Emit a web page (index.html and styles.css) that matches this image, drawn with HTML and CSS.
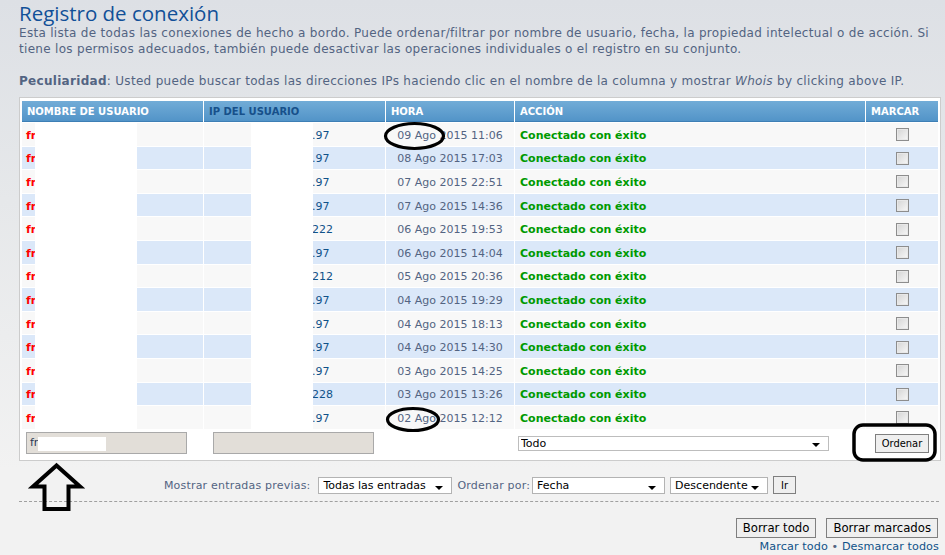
FILE: index.html
```html
<!DOCTYPE html>
<html lang="es">
<head>
<meta charset="utf-8">
<title>Registro de conexión</title>
<link rel="stylesheet" href="styles.css">
</head>
<body>
<div class="page">
  <h1 class="title">Registro de conexión</h1>
  <p class="intro">Esta lista de todas las conexiones de hecho a bordo. Puede ordenar/filtrar por nombre de usuario, fecha, la propiedad intelectual o de acción. Si tiene los permisos adecuados, también puede desactivar las operaciones individuales o el registro en su conjunto.</p>
  <p class="note"><strong>Peculiaridad</strong>: Usted puede buscar todas las direcciones IPs haciendo clic en el nombre de la columna y mostrar <em>Whois</em> by clicking above IP.</p>

  <div class="panel">
    <table class="log">
      <colgroup>
        <col class="c-user"><col class="c-ip"><col class="c-time"><col class="c-act"><col class="c-mark">
      </colgroup>
      <thead>
        <tr>
          <th>Nombre de usuario</th>
          <th class="sorted">IP del usuario</th>
          <th>Hora</th>
          <th>Acción</th>
          <th>Marcar</th>
        </tr>
      </thead>
      <tbody>
        <tr class="r1"><td class="user">fr</td><td class="ip">.97</td><td class="time">09 Ago 2015 11:06</td><td class="act">Conectado con éxito</td><td class="mark"><input type="checkbox" class="cb"></td></tr>
        <tr class="r2"><td class="user">fr</td><td class="ip">.97</td><td class="time">08 Ago 2015 17:03</td><td class="act">Conectado con éxito</td><td class="mark"><input type="checkbox" class="cb"></td></tr>
        <tr class="r1"><td class="user">fr</td><td class="ip">.97</td><td class="time">07 Ago 2015 22:51</td><td class="act">Conectado con éxito</td><td class="mark"><input type="checkbox" class="cb"></td></tr>
        <tr class="r2"><td class="user">fr</td><td class="ip">.97</td><td class="time">07 Ago 2015 14:36</td><td class="act">Conectado con éxito</td><td class="mark"><input type="checkbox" class="cb"></td></tr>
        <tr class="r1"><td class="user">fr</td><td class="ip">222</td><td class="time">06 Ago 2015 19:53</td><td class="act">Conectado con éxito</td><td class="mark"><input type="checkbox" class="cb"></td></tr>
        <tr class="r2"><td class="user">fr</td><td class="ip">.97</td><td class="time">06 Ago 2015 14:04</td><td class="act">Conectado con éxito</td><td class="mark"><input type="checkbox" class="cb"></td></tr>
        <tr class="r1"><td class="user">fr</td><td class="ip">212</td><td class="time">05 Ago 2015 20:36</td><td class="act">Conectado con éxito</td><td class="mark"><input type="checkbox" class="cb"></td></tr>
        <tr class="r2"><td class="user">fr</td><td class="ip">.97</td><td class="time">04 Ago 2015 19:29</td><td class="act">Conectado con éxito</td><td class="mark"><input type="checkbox" class="cb"></td></tr>
        <tr class="r1"><td class="user">fr</td><td class="ip">.97</td><td class="time">04 Ago 2015 18:13</td><td class="act">Conectado con éxito</td><td class="mark"><input type="checkbox" class="cb"></td></tr>
        <tr class="r2"><td class="user">fr</td><td class="ip">.97</td><td class="time">04 Ago 2015 14:30</td><td class="act">Conectado con éxito</td><td class="mark"><input type="checkbox" class="cb"></td></tr>
        <tr class="r1"><td class="user">fr</td><td class="ip">.97</td><td class="time">03 Ago 2015 14:25</td><td class="act">Conectado con éxito</td><td class="mark"><input type="checkbox" class="cb"></td></tr>
        <tr class="r2"><td class="user">fr</td><td class="ip">228</td><td class="time">03 Ago 2015 13:26</td><td class="act">Conectado con éxito</td><td class="mark"><input type="checkbox" class="cb"></td></tr>
        <tr class="r1"><td class="user">fr</td><td class="ip">.97</td><td class="time">02 Ago 2015 12:12</td><td class="act">Conectado con éxito</td><td class="mark"><input type="checkbox" class="cb"></td></tr>
      </tbody>
      <tfoot>
        <tr class="filter">
          <td class="f-user"><div class="field">fr</div></td>
          <td class="f-ip"><div class="field"></div></td>
          <td></td>
          <td class="f-act"><select class="sel sel-todo"><option>Todo</option></select></td>
          <td class="f-mark"><button class="btn btn-small" type="button">Ordenar</button></td>
        </tr>
      </tfoot>
    </table>
  </div>

  <div class="controls">
    <label class="lbl">Mostrar entradas previas:</label>
    <select class="sel sel-prev"><option>Todas las entradas</option></select>
    <label class="lbl lbl-sort">Ordenar por:</label>
    <select class="sel sel-key"><option>Fecha</option></select>
    <select class="sel sel-dir"><option>Descendente</option></select>
    <button class="btn btn-small btn-go" type="button">Ir</button>
  </div>

  <div class="sep"></div>

  <div class="actions">
    <button class="btn btn-big" type="button">Borrar todo</button>
    <button class="btn btn-big" type="button">Borrar marcados</button>
  </div>
  <div class="links"><a href="#">Marcar todo</a> • <a href="#">Desmarcar todos</a></div>
</div>

<svg class="marks" width="945" height="555" viewBox="0 0 945 555" aria-hidden="true">
  <rect x="35" y="123" width="102" height="306" fill="#fff"/>
  <rect x="251" y="123" width="62" height="306" fill="#fff"/>
  <rect x="38" y="437" width="68" height="14" fill="#fff"/>
  <g fill="none" stroke="#000">
    <ellipse cx="414.5" cy="136" rx="29" ry="12.5" stroke-width="3.2"/>
    <ellipse cx="413" cy="419.5" rx="25.5" ry="11" stroke-width="3.2"/>
    <rect x="854" y="425" width="81" height="35" rx="9" stroke-width="3.5"/>
    <polygon points="56.5,465.5 33,486.5 44.5,486.5 44.5,509 68.5,509 68.5,486.5 80,486.5" stroke-width="4"/>
  </g>
</svg>
</body>
</html>
```

FILE: styles.css
```css
* { box-sizing: border-box; }

body {
  margin: 0;
  position: relative;
  min-height: 555px;
  background-color: #f2f2f2;
  background-image: linear-gradient(#dde0e5 0, #e6e8ea 200px, #f2f2f2 470px);
  background-repeat: no-repeat;
  font-family: "DejaVu Sans", Verdana, sans-serif;
  font-size: 11px;
  color: #536482;
}

.page {
  margin-left: 19px;
  width: 922px;
}

.title {
  margin: 0;
  padding-top: 1px;
  font-family: "Open Sans", "DejaVu Sans", sans-serif;
  font-weight: normal;
  font-size: 20.5px;
  line-height: 24px;
  color: #115098;
}

.intro,
.note {
  font-size: 12px;
  letter-spacing: 0.3px;
  line-height: 16px;
}

.intro { margin: 0; }

.note { margin: 16px 0 8px; }

.panel {
  background: #fff;
  border: 1px solid #ccc;
  padding: 2px 1px;
}

.log {
  width: 100%;
  table-layout: fixed;
  border-collapse: separate;
  border-spacing: 1px;
}

.c-user { width: 181px; }
.c-ip { width: 181px; }
.c-time { width: 128px; }
.c-act { width: 350px; }
.c-mark { width: 72px; }

.log th {
  height: 21px;
  padding: 0 5px;
  text-align: left;
  font-size: 10px;
  font-weight: bold;
  text-transform: uppercase;
  color: #fff;
  background: linear-gradient(#72acd7, #5294c8);
  border-bottom: 1px solid #3e7fb5;
  white-space: nowrap;
}

.log th.sorted { color: #17508a; }

.log td {
  height: 22.6px;
  padding: 2px 0 0;
  white-space: nowrap;
  overflow: hidden;
}

.r1 td { background: #f8f8f8; }
.r2 td { background: #dbe8f9; }

.log .user {
  padding-left: 4px;
  color: #ff0000;
  font-weight: bold;
}

.log .ip {
  padding-left: 108px;
  color: #105289;
}

.time {
  text-align: center;
  color: #536482;
}

.log .act {
  padding-left: 5px;
  color: #009a00;
  font-weight: bold;
}

.mark { text-align: center; }

.cb {
  appearance: none;
  -webkit-appearance: none;
  display: inline-block;
  vertical-align: middle;
  width: 13px;
  height: 13px;
  margin: 0 0 1px;
  border: 1px solid #8d8d8d;
  background: linear-gradient(135deg, #d4d4d4, #f8f8f8);
  box-shadow: inset 0 0 0 1px #e8e8e8;
}

.log .filter td {
  height: 27px;
  padding-top: 0;
  background: #fff;
  vertical-align: middle;
}

.log .f-user { padding-left: 4px; }
.log .f-ip { padding-left: 9px; }
.log .f-act { padding-left: 3px; }
.f-mark { text-align: center; }

.field {
  width: 161px;
  height: 22px;
  line-height: 20px;
  padding-left: 3px;
  background: #e2ded8;
  border: 1px solid #a9a9a9;
  color: #2b3a55;
  font-size: 11px;
}

.sel {
  appearance: none;
  -webkit-appearance: none;
  font-family: "DejaVu Sans", Verdana, sans-serif;
  font-size: 11px;
  color: #000;
  background: #fff url("data:image/svg+xml,%3Csvg xmlns='http://www.w3.org/2000/svg' width='8' height='4'%3E%3Cpath d='M0 0h8L4 4z'/%3E%3C/svg%3E") no-repeat right 8px bottom 3px;
  border: 1px solid #b3b3b3;
  border-radius: 0;
  padding: 0 2px;
  margin: 0;
}

.sel-todo {
  width: 311px;
  height: 15px;
  line-height: 13px;
  border-color: #bdbdbd;
}

.btn {
  font-family: "DejaVu Sans Condensed", "DejaVu Sans", sans-serif;
  font-stretch: condensed;
  color: #000;
  background: #efefef;
  border: 1px solid #7f7f7f;
  border-radius: 0;
  padding: 0;
  margin: 0;
}

.btn-small {
  font-size: 11px;
  height: 19px;
  width: 54px;
}

.controls {
  display: flex;
  justify-content: center;
  align-items: center;
  margin-top: 15px;
  height: 19px;
}

.controls .lbl {
  letter-spacing: 0.2px;
}

.controls .sel {
  height: 17px;
  line-height: 15px;
  padding-left: 4px;
}

.lbl { margin-right: 8px; }
.lbl-sort { margin-left: 5px; margin-right: 2px; }

.sel-prev { width: 134px; }
.sel-key { width: 133px; }
.controls .sel-dir { width: 98px; margin-left: 5px; }

.btn-go {
  width: 23px;
  height: 18px;
  margin-left: 5px;
}

.sep {
  height: 0;
  margin: 6px 2px 0 0;
  border-top: 1px dashed #a0a0a0;
}

.actions {
  display: flex;
  justify-content: flex-end;
  gap: 10px;
  margin-top: 16px;
  padding-right: 3px;
}

.btn-big {
  font-size: 13px;
  height: 20px;
  padding: 0 6px;
}

.links {
  text-align: right;
  font-size: 11.2px;
  letter-spacing: 0.1px;
  line-height: 16px;
  margin-top: 1px;
  padding-right: 2px;
  color: #536482;
}

.links a {
  color: #105289;
  text-decoration: none;
}

.marks {
  position: absolute;
  left: 0;
  top: 0;
  pointer-events: none;
}
```
